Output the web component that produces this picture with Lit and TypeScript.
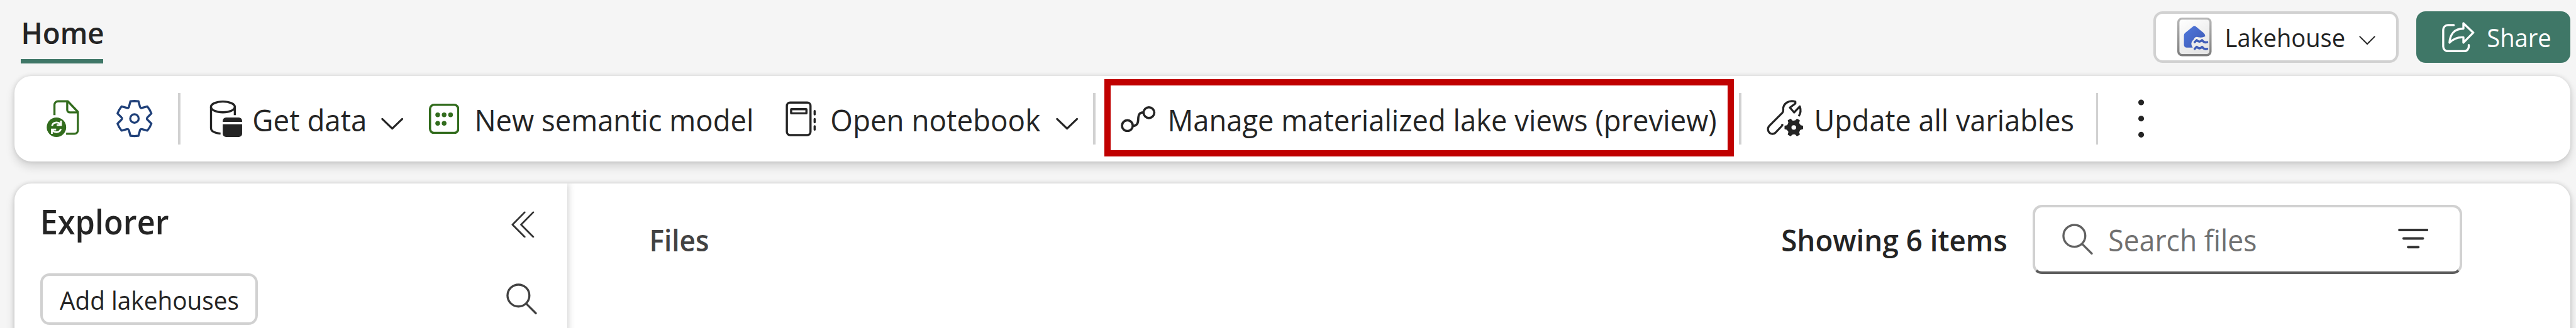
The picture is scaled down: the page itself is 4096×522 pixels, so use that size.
import { LitElement, html, css, svg } from "lit";
import { customElement, property, state } from "lit/decorators.js";
import { styleMap } from "lit/directives/style-map.js";

const FAMILY = '"Open Sans", "Noto Sans", sans-serif';

/** One line of text whose glyphs are condensed to span exactly `span` pixels. */
@customElement("fit-text")
class FitText extends LitElement {
  @property() text = "";
  @property({ type: Number }) span = 100;
  @property({ type: Number }) size = 51;
  @property({ type: Number }) weight = 400;
  @state() private scale = 1;
  @state() private shift = 0;

  static styles = css`
    :host { display: block; flex: none; line-height: 1.4; white-space: nowrap; }
    .box { display: block; }
    .ink { display: inline-block; transform-origin: 0 50%; font-family: "Open Sans", "Noto Sans", sans-serif; }
  `;

  willUpdate() {
    const ctx = document.createElement("canvas").getContext("2d")!;
    ctx.font = `${this.weight} ${this.size}px ${FAMILY}`;
    const m = ctx.measureText(this.text);
    this.scale = this.span / (m.actualBoundingBoxLeft + m.actualBoundingBoxRight);
    this.shift = m.actualBoundingBoxLeft * this.scale;
  }

  render() {
    return html`<span class="box" style=${styleMap({ width: `${this.span}px` })}
      ><span class="ink" style=${styleMap({
        fontSize: `${this.size}px`,
        fontWeight: String(this.weight),
        transform: `translateX(${this.shift}px) scaleX(${this.scale})`,
      })}>${this.text}</span></span>`;
  }
}

const rotate = (x: number, y: number, deg: number) => {
  const a = (deg * Math.PI) / 180;
  return `${(x * Math.cos(a) - y * Math.sin(a)).toFixed(2)} ${(x * Math.sin(a) + y * Math.cos(a)).toFixed(2)}`;
};

const gearPath = (pts: number[][], valley: number[], start = 0) => {
  let d = "";
  for (let k = 0; k < 6; k++) {
    const a = start + k * 60;
    pts.forEach(([x, y], i) => {
      d += `${k === 0 && i === 0 ? "M" : "L"}${rotate(x, y, a)}`;
    });
    d += `Q${rotate(valley[0], valley[1], a)} ${rotate(pts[0][0], pts[0][1], a + 60)}`;
  }
  return d + "Z";
};

const cog = gearPath([[-9.3, -20.5], [-6.9, -29.4], [0, -30], [6.9, -29.4], [9.3, -20.5]], [10.4, -17]);
const solidCog = gearPath([[-9, -35], [-7, -45], [7, -45], [9, -35]], [12, -28], 30);

const icons = {
  fileSync: svg`<svg width="58" height="66" viewBox="78 172 58 66">
    <g fill="none" stroke="#326c1d" stroke-width="3.6" stroke-linecap="butt" stroke-linejoin="round">
      <path d="M92.6 199V181.5a6 6 0 0 1 6-6H115.5L132.6 193.5V225a6 6 0 0 1-6 6H112.5"/>
      <path d="M114.4 176V190a4.5 4.5 0 0 0 4.5 4.5H132"/>
    </g>
    <circle cx="96" cy="219.8" r="16.6" fill="#326c1d"/>
    <g fill="none" stroke="#fff" stroke-width="3">
      <path d="M88.5 217.5C90 211 98 210 103 214.5M103.8 208.5V216.2H96.5"/>
      <path d="M103.5 222.5C102 229 94 230 89 225.5M88.2 231V223.6H95.5"/>
    </g></svg>`,
  settings: svg`<svg width="64" height="68" viewBox="-32 -34 64 68">
    <g fill="none" stroke="#1f4079" stroke-width="3.6" stroke-linejoin="round"><path d="${cog}"/><circle r="7.2"/></g></svg>`,
  database: svg`<svg width="56" height="64" viewBox="358 173 56 64">
    <g fill="none" stroke="#242424" stroke-width="3.6">
      <ellipse cx="381" cy="185" rx="20.4" ry="9.2"/>
      <path d="M360.7 185V221C360.7 226.5 367 229.6 377 230.6M401.4 185V199"/>
    </g>
    <path fill="#242424" d="M380.8 210.6V208.5a5.5 5.5 0 0 1 5.5-5.5H408.3a5.5 5.5 0 0 1 5.5 5.5V210.6ZM380.8 214.7H413.8V231a5.5 5.5 0 0 1-5.5 5.5H386.3a5.5 5.5 0 0 1-5.5-5.5Z"/></svg>`,
  model: svg`<svg width="52" height="52" viewBox="0 0 52 52">
    <rect x="1.9" y="1.9" width="48.2" height="48.2" rx="7" fill="none" stroke="#326c1d" stroke-width="3.8"/>
    <g fill="#326c1d"><circle cx="15" cy="19" r="4"/><circle cx="26" cy="19" r="4"/><circle cx="37" cy="19" r="4"/>
    <circle cx="15" cy="33.5" r="4"/><circle cx="26" cy="33.5" r="4"/></g></svg>`,
  notebook: svg`<svg width="53" height="60" viewBox="1342 173 53 60">
    <g fill="none" stroke="#242424" stroke-width="3.7">
      <rect x="1344.3" y="175.5" width="40.4" height="55.5" rx="5.5"/>
      <rect x="1351.6" y="186.8" width="26.2" height="7" rx=".5"/>
      <path stroke-linecap="round" d="M1391.8 190V195.6M1391.8 203.7V209M1391.8 216V221.6"/></g></svg>`,
  flow: svg`<svg width="60" height="46" viewBox="1914 180 60 46">
    <g fill="none" stroke="#242424" stroke-width="3.9">
      <circle cx="1925.4" cy="214.3" r="9.2"/><circle cx="1962.2" cy="192.1" r="9.2"/>
      <path d="M1934.5 214.8C1942 214.8 1943.6 210.5 1943.9 203.2S1945.6 191.7 1953 191.7"/></g></svg>`,
  wrench: svg`<svg width="90" height="90" viewBox="0 0 270 270">
    <path fill="none" stroke="#242424" stroke-width="10.5" stroke-linejoin="round"
      d="M203 122C214 107 216 92 209 72L180 103L158 78L186 57V48C155 38 121 56 124 89Q125 98 119 105L53 171C40 184 45 206 62 212Q75 215 85 206L119 170V162"/>
    <g transform="translate(178 180)"><path fill="#242424" stroke="#242424" stroke-width="5" stroke-linejoin="round" d="${solidCog}"/><circle r="12" fill="#fff"/></g></svg>`,
  more: svg`<svg width="12" height="66" viewBox="0 0 12 66"><g fill="#242424"><circle cx="6" cy="5.4" r="4.9"/><circle cx="6" cy="33" r="4.9"/><circle cx="6" cy="60.6" r="4.9"/></g></svg>`,
  chevron: svg`<svg width="38" height="22" viewBox="0 0 38 22"><path fill="none" stroke="#242424" stroke-width="3.4" stroke-linecap="round" stroke-linejoin="round" d="M2 2.5L19 19L36 2.5"/></svg>`,
  chevronThin: svg`<svg width="28" height="16" viewBox="0 0 28 16"><path fill="none" stroke="#242424" stroke-width="2.2" stroke-linecap="round" d="M1.5 1.5L14 14L26.5 1.5"/></svg>`,
  lakehouse: svg`<svg width="59" height="66" viewBox="0 0 59 66">
    <defs>
      <linearGradient id="rim" x2="0" y2="1"><stop stop-color="#b8b8b8"/><stop offset="1" stop-color="#7d7d7d"/></linearGradient>
      <linearGradient id="card" x2=".5" y2="1"><stop stop-color="#fff"/><stop offset="1" stop-color="#e6e6e6"/></linearGradient>
      <linearGradient id="house" x2="1" y2="1"><stop stop-color="#5078dc"/><stop offset="1" stop-color="#3c58b4"/></linearGradient>
    </defs>
    <rect x="0" y="0" width="58.6" height="66" rx="8" fill="url(#rim)"/>
    <rect x="3.7" y="3.4" width="51.2" height="59" rx="4.8" fill="url(#card)"/>
    <path fill="url(#house)" d="M26.8 15.2a4 4 0 0 1 5 0L45.5 26.5Q47.5 28.5 47.8 32Q42 35 36 33.5Q30 32 28.5 37Q24 41 24 45Q24.5 49 26.5 51.3H16a4.6 4.6 0 0 1-4.6-4.6V30.5Q11.4 27.5 13.6 26Z"/>
    <path fill="none" stroke="#3f5db8" stroke-width="3.8" stroke-linecap="round" stroke-linejoin="round"
      d="M29.8 42L33.2 38.6Q38 43.6 42.3 38.6Q46 43.6 51 42M29.8 53.5L33.2 50Q38 55 42.3 50Q46 55 51 53.5"/></svg>`,
  share: svg`<svg width="56" height="52" viewBox="0 0 56 52"><g fill="none" stroke="#fff" stroke-width="3.6" stroke-linejoin="round" stroke-linecap="round">
    <path d="M20 5.3H10A8 8 0 0 0 2 13.3V42A8 8 0 0 0 10 50H38A8 8 0 0 0 45.7 42V39.5"/>
    <path d="M36.5 2.2L53.4 18.2L36.5 35.3V26.3C25 25.3 18 30.3 12.8 35.3C13.5 21 21 11.5 36.5 11.3Z"/></g></svg>`,
  collapse: svg`<svg width="40" height="46" viewBox="0 0 40 46"><path fill="none" stroke="#333" stroke-width="3" stroke-linecap="round" stroke-linejoin="round" d="M22.8 2L2 23L22.8 44M37.5 2L16.7 23L37.5 44"/></svg>`,
  search: svg`<svg width="54" height="54" viewBox="0 0 54 54"><g fill="none" stroke="currentColor" stroke-width="3.6" stroke-linecap="round"><circle cx="20.8" cy="20.8" r="18.7"/><path d="M34.5 35L50.5 51"/></g></svg>`,
  filter: svg`<svg width="52" height="36" viewBox="0 0 52 36"><path stroke="#333" stroke-width="4.3" stroke-linecap="round" d="M2.3 3.2H49.7M9.6 17.8H42.4M17.3 32.5H34.7"/></svg>`,
};

@customElement("app-root")
class AppRoot extends LitElement {
  static styles = css`
    :host { display: block; width: 100vw; height: 100vh; overflow: hidden; background: #f5f5f5; color: #242424; font-family: "Open Sans", "Noto Sans", sans-serif; }
    svg { display: block; flex: none; }
    .screen { zoom: 0.930909; display: flex; flex-direction: column; box-sizing: border-box; width: 4400px; height: 562px; padding: 0 10.2px 0 24.5px; overflow: hidden; }
    .top { display: flex; align-items: flex-start; justify-content: space-between; flex: none; height: 129.5px; }
    .tab { margin: 20.4px 0 0 10.8px; padding: 0 0 8.7px 4px; width: 137px; height: 71.5px; border-bottom: 7.55px solid #3f7767; }
    .actions { display: flex; margin-top: 19px; gap: 30px; }
    .item-menu, .share { display: flex; align-items: center; box-sizing: border-box; height: 88.7px; border-radius: 16px; }
    .item-menu { width: 418.7px; background: #fff; border: 4.3px solid #d1d1d1; padding-left: 36.5px; }
    .item-menu fit-text { margin: 4px 25.5px 0 25.3px; }
    .item-menu .thin { margin-top: 11px; }
    .share { width: 262.8px; background: #3f7767; color: #fff; padding-left: 44px; gap: 22.3px; }
    .share fit-text { margin-top: 4px; }
    .toolbar { display: flex; align-items: center; flex: none; box-sizing: border-box; height: 147px; padding-left: 53.5px; border-radius: 29px; background: #fff; box-shadow: 0 8px 16px rgba(0, 0, 0, 0.14), 0 0 8px rgba(0, 0, 0, 0.12); }
    .toolbar fit-text { margin-top: 4px; }
    .rule { flex: none; width: 4px; height: 88px; background: #d1d1d1; }
    .drop { margin-top: 17px; }
    .marked { display: flex; align-items: center; box-sizing: border-box; flex: none; width: 1075.8px; height: 133px; margin: 0 8.3px 3px 15.3px; padding: 3px 0 0 17.4px; border: 10.75px solid #c00000; }
    .marked fit-text { margin-left: 24.4px; }
    .g1 { margin-left: 62px; } .g2 { margin-left: 42px; } .g3 { margin-left: 50px; }
    .g4 { margin-left: 20px; } .g5 { margin-left: 27.3px; } .g6 { margin-left: 43.3px; }
    .g7 { margin-left: 29.7px; } .g8 { margin-left: 58.7px; } .g9 { margin-left: 26.2px; }
    .g10 { margin-left: 26.8px; } .g11 { margin-left: 25px; } .g12 { margin-left: 30.6px; }
    .g13 { margin-left: 7.9px; } .g14 { margin-left: 38.2px; } .g15 { margin-left: 67.8px; }
    .panel { display: flex; flex: none; height: 300px; margin-top: 37px; border-radius: 29px; background: #fff; box-shadow: 0 8px 16px rgba(0, 0, 0, 0.14), 0 0 8px rgba(0, 0, 0, 0.16); overflow: hidden; }
    .explorer { flex: none; box-sizing: border-box; width: 944.5px; padding: 24px 50.4px 0 44.2px; box-shadow: 0 0 12px rgba(0, 0, 0, 0.24); }
    .head { display: flex; justify-content: space-between; align-items: center; height: 92px; padding: 0 5.5px 0 4.5px; }
    .head fit-text { margin-top: -8px; }
    .tools { display: flex; justify-content: space-between; align-items: center; margin-top: 38px; height: 88.4px; }
    .add { display: flex; align-items: center; box-sizing: border-box; width: 372px; height: 88.4px; border: 4.3px solid #d1d1d1; border-radius: 16px; padding-left: 29.4px; }
    .add fit-text { margin-top: 4px; }
    .glass { color: #424242; }
    .files { display: flex; flex: 1; align-items: center; height: 117.7px; margin-top: 36.7px; padding: 0 183.8px 0 144px; }
    .files > .title { color: #424242; margin-top: 3px; }
    .count { margin: 3px 45px 0 auto; }
    .search { display: flex; align-items: center; box-sizing: border-box; width: 734.6px; height: 117.7px; border: 4.3px solid #d1d1d1; border-bottom-color: #5c5c5c; border-radius: 16px; padding: 0 54px 0 47px; color: #616161; }
    .search .hint { color: #707070; margin: 3px auto 0 25.9px; }
    .search .sieve { margin-top: -3px; }
  `;

  render() {
    return html`<main class="screen">
      <header class="top">
        <div class="tab"><fit-text text="Home" span="136" weight="650" size="51"></fit-text></div>
        <div class="actions">
          <div class="item-menu">${icons.lakehouse}<fit-text text="Lakehouse" span="200.6" size="43.7"></fit-text><span class="thin">${icons.chevronThin}</span></div>
          <div class="share">${icons.share}<fit-text text="Share" span="106.6" size="43.7"></fit-text></div>
        </div>
      </header>
      <nav class="toolbar">
        ${icons.fileSync}<span class="g1">${icons.settings}</span><span class="rule g2"></span>
        <span class="g3">${icons.database}</span><fit-text class="g4" text="Get data" span="189.6"></fit-text><span class="drop g5">${icons.chevron}</span>
        <span class="g6">${icons.model}</span><fit-text class="g7" text="New semantic model" span="469.4"></fit-text>
        <span class="g8">${icons.notebook}</span><fit-text class="g9" text="Open notebook" span="356"></fit-text><span class="drop g10">${icons.chevron}</span>
        <span class="rule g11"></span>
        <div class="marked">${icons.flow}<fit-text text="Manage materialized lake views (preview)" span="932.4"></fit-text></div>
        <span class="rule"></span>
        <span class="g12">${icons.wrench}</span><fit-text class="g13" text="Update all variables" span="439.2"></fit-text>
        <span class="rule g14"></span><span class="g15">${icons.more}</span>
      </nav>
      <section class="panel">
        <aside class="explorer">
          <div class="head"><fit-text text="Explorer" span="215.2" weight="650" size="58.3"></fit-text>${icons.collapse}</div>
          <div class="tools"><div class="add"><fit-text text="Add lakehouses" span="304.3" size="43.7"></fit-text></div><span class="glass">${icons.search}</span></div>
        </aside>
        <div class="files">
          <fit-text class="title" text="Files" span="96.5" weight="650"></fit-text>
          <fit-text class="count" text="Showing 6 items" span="382.6" weight="650"></fit-text>
          <div class="search">${icons.search}<fit-text class="hint" text="Search files" span="250.7"></fit-text><span class="sieve">${icons.filter}</span></div>
        </div>
      </section>
    </main>`;
  }
}
